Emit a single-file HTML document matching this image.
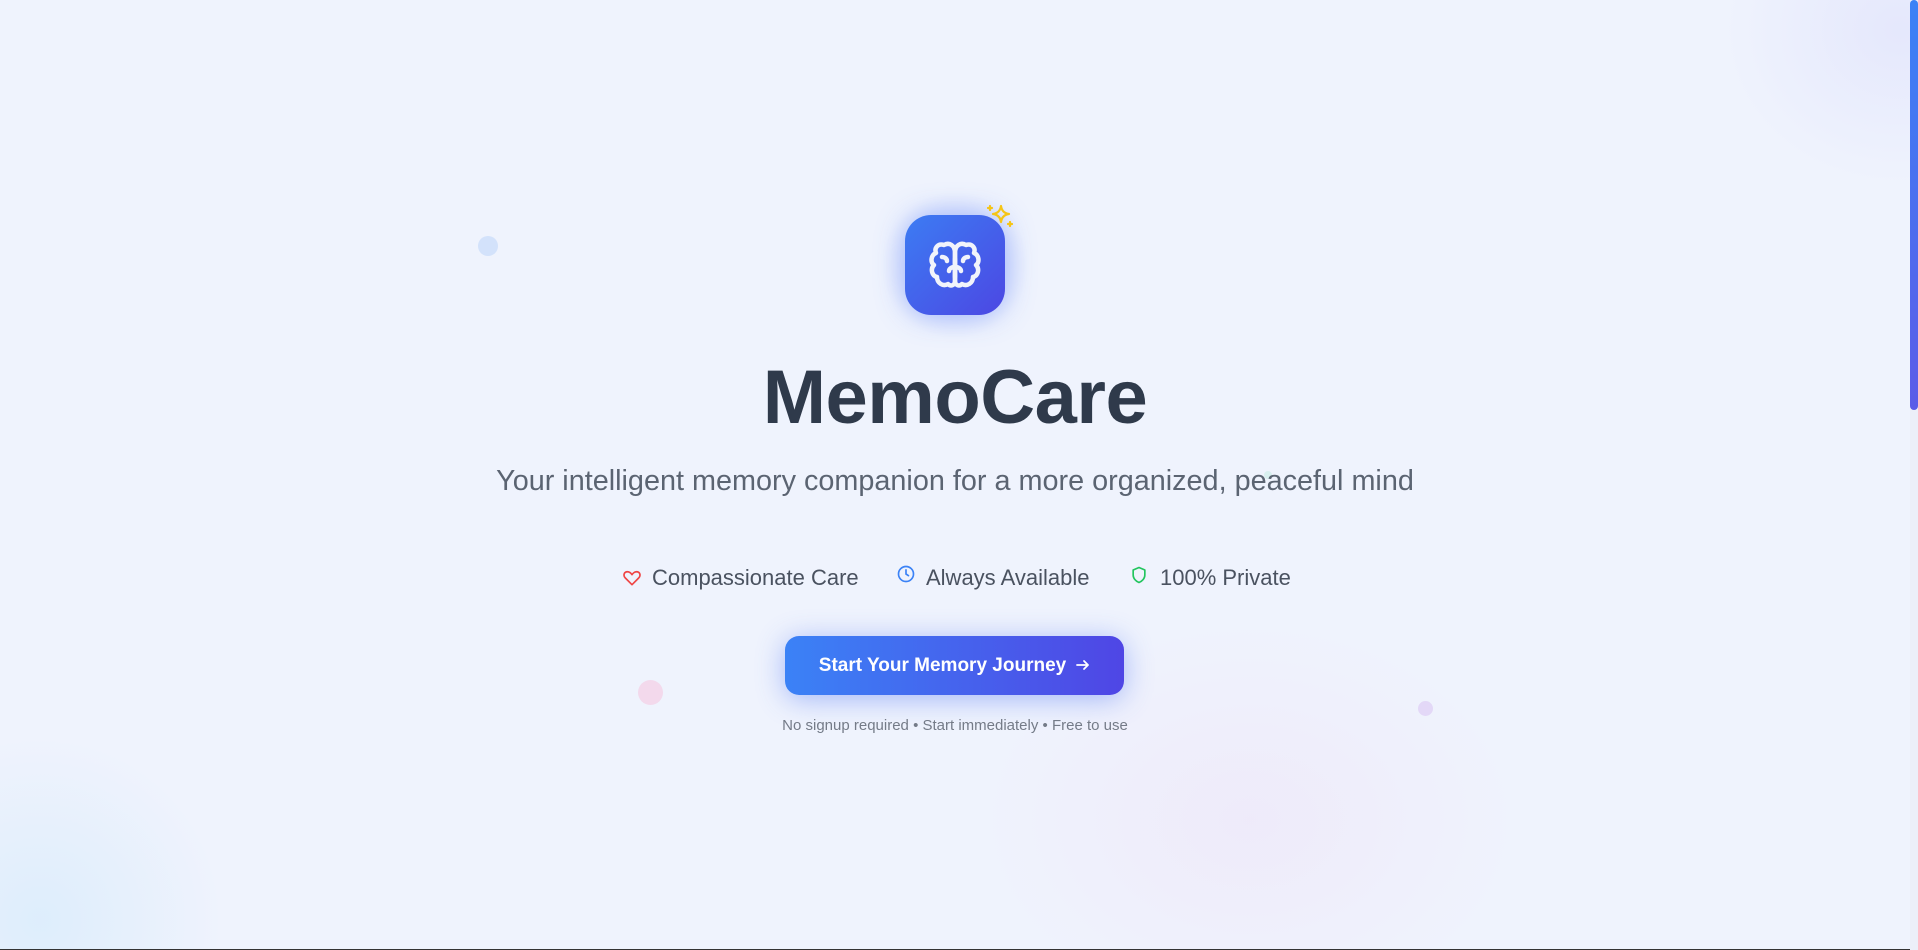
<!DOCTYPE html>
<html><head><meta charset="utf-8"><style>
html,body{margin:0;padding:0;width:1918px;height:950px;overflow:hidden}
body{position:relative;font-family:"Liberation Sans",sans-serif;
background:
radial-gradient(ellipse 260px 260px at 40px 920px, rgba(200,230,250,0.45), transparent 70%),
radial-gradient(ellipse 380px 280px at 1250px 820px, rgba(238,224,245,0.45), transparent 70%),
radial-gradient(ellipse 250px 220px at 1900px 30px, rgba(222,224,252,0.6), transparent 70%),
#eff3fd;}
.abs{position:absolute}
.dot{position:absolute;border-radius:50%}
.center{position:absolute;left:0;width:1910px;text-align:center}
</style></head><body>
<div class="dot" style="left:478px;top:236px;width:20px;height:20px;background:#d3e2fb"></div>
<div class="dot" style="left:638px;top:680px;width:25px;height:25px;background:#f3d9ec"></div>
<div class="dot" style="left:1418px;top:701px;width:15px;height:15px;background:#e3d8f7"></div>
<div class="dot" style="left:1264px;top:471px;width:8px;height:8px;background:#d8efef"></div>

<div class="abs" style="left:875px;top:185px;width:160px;height:160px;border-radius:50%;background:radial-gradient(circle, rgba(99,130,246,0.35), transparent 65%)"></div>
<div class="abs" style="left:905px;top:215px;width:100px;height:100px;border-radius:26px;background:linear-gradient(135deg,#3c7cf3,#4c47e3);box-shadow:0 0 30px rgba(80,120,250,0.45)">
<svg width="100" height="100" viewBox="0 0 100 100" fill="none" stroke="#f1f3fb" stroke-width="4.5" stroke-linecap="round" stroke-linejoin="round">
<path d="M50 38 C50 30 44 27 39 30 C33 28 29 33 31 38 C26 40 25 47 29 50 C25 54 27 61 32 62 C32 68 38 72 43 69 C46 72 50 70 50 66 Z"/>
<path d="M50 38 C50 30 56 27 61 30 C67 28 71 33 69 38 C74 40 75 47 71 50 C75 54 73 61 68 62 C68 68 62 72 57 69 C54 72 50 70 50 66 Z"/>
<path d="M50 44 V62 M50 52 C46 52 44 54 44 56 M50 52 C54 52 56 54 56 56 M37 42 C40 42 42 44 42 46 M63 42 C60 42 58 44 58 46"/>
</svg></div>
<svg class="abs" style="left:985px;top:200px" width="30" height="30" viewBox="0 0 30 30" fill="none" stroke="#f5c518" stroke-width="2.2" stroke-linejoin="round" stroke-linecap="round">
<path d="M16 6 Q17 13 24 14 Q17 15 16 22 Q15 15 8 14 Q15 13 16 6Z"/>
<path d="M5 6 V10 M3 8 H7 M25 22 V26 M23 24 H27"/>
</svg>

<div class="center" style="top:353px;font-size:76px;font-weight:bold;color:#2f3a4b;letter-spacing:-0.5px;line-height:90px">MemoCare</div>
<div class="center" style="top:463px;font-size:28.8px;color:#5b6472;line-height:36px;font-weight:300">Your intelligent memory companion for a more organized, peaceful mind</div>

<div class="abs" style="top:563px;left:620px;font-size:22px;color:#4a5260;line-height:30px;white-space:nowrap">
<svg class="abs" style="left:2px;top:5px" width="20" height="20" viewBox="0 0 24 24" fill="none" stroke="#ef4444" stroke-width="2" stroke-linejoin="round"><path d="M12 20 L4 12 C1 9 2.5 4.5 6.5 4.5 C9 4.5 11 6.5 12 8 C13 6.5 15 4.5 17.5 4.5 C21.5 4.5 23 9 20 12 Z"/></svg>
<span class="abs" style="left:32px">Compassionate Care</span>
<svg class="abs" style="left:276px;top:1px" width="20" height="20" viewBox="0 0 24 24" fill="none" stroke="#3b82f6" stroke-width="2" stroke-linecap="round"><circle cx="12" cy="12" r="9"/><path d="M12 7 V12 L15 14"/></svg>
<span class="abs" style="left:306px">Always Available</span>
<svg class="abs" style="left:509px;top:1px" width="20" height="22" viewBox="0 0 24 24" fill="none" stroke="#22c55e" stroke-width="2" stroke-linejoin="round"><path d="M12 3 L19 6 V12 C19 16 16 19.5 12 21 C8 19.5 5 16 5 12 V6 Z"/></svg>
<span class="abs" style="left:540px">100% Private</span>
</div>

<div class="abs" style="left:785px;top:636px;width:339px;height:59px;border-radius:14px;background:linear-gradient(90deg,#3b82f6,#4f46e5);box-shadow:0 4px 28px rgba(70,110,245,0.45);color:#fff;font-size:19px;font-weight:bold;line-height:59px;text-align:center">
<span style="position:relative;left:-12px">Start Your Memory Journey</span>
<svg class="abs" style="left:290px;top:21px" width="16" height="16" viewBox="0 0 16 16" fill="none" stroke="#fff" stroke-width="1.8" stroke-linecap="round" stroke-linejoin="round"><path d="M2 8 H13 M9 4 L13 8 L9 12"/></svg>
</div>
<div class="center" style="top:717px;font-size:15px;color:#747b88;line-height:18px">No signup required • Start immediately • Free to use</div>

<div class="abs" style="left:1910px;top:0;width:8px;height:950px;background:#eceff9"></div>
<div class="abs" style="left:1910px;top:0;width:8px;height:410px;border-radius:4px;background:linear-gradient(180deg,#3b82f6,#5b5ce8)"></div>
<div class="abs" style="left:0;top:949px;width:1910px;height:1px;background:#333"></div>
</body></html>
